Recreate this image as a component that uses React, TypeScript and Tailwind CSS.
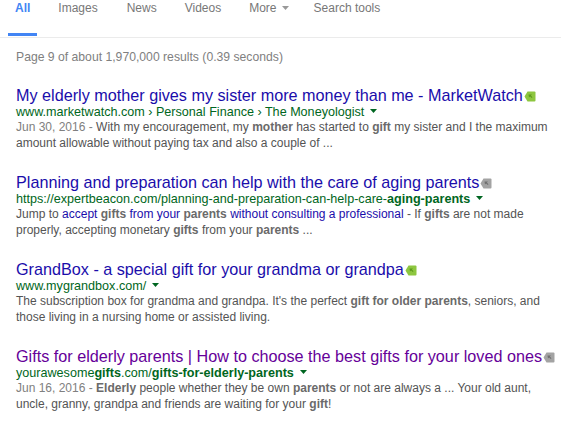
import React from 'react'

type Part = { t: string; b?: boolean; link?: boolean }

function TagIcon({ green }: { green: boolean }) {
  const fill = green ? '#8dc63f' : '#a3a3a3'
  const dark = green ? '#5f9a1e' : '#707070'
  return (
    <svg width="12" height="11" viewBox="0 0 12 11" className="inline-block align-[-1px] ml-px">
      <path d="M3.5 0.5 H10.5 A1 1 0 0 1 11.5 1.5 V9.5 A1 1 0 0 1 10.5 10.5 H3.5 L0.5 5.5 Z" fill={fill} />
      <path d="M4.5 3.5 L8 3.5 L6.9 4.6 L8.5 6.2 L7.7 7 L6.1 5.4 L5 6.5 Z" fill={dark} />
    </svg>
  )
}

function Caret() {
  return (
    <svg width="7" height="4" viewBox="0 0 7 4" className="inline-block ml-[6px] align-[3px]">
      <path d="M0 0 H7 L3.5 4 Z" fill="#006621" />
    </svg>
  )
}

function Snippet({ date, parts }: { date?: string; parts: Part[] }) {
  return (
    <div className="text-[12px] leading-[16px] text-[#545454] w-[545px]">
      {date && <span className="text-[#808080]">{date} - </span>}
      {parts.map((p, i) => (
        <span
          key={i}
          className={`${p.b ? 'font-bold text-[#6a6a6a]' : ''} ${p.link ? 'text-[#1a0dab]' : ''}`}
        >
          {p.t}
        </span>
      ))}
    </div>
  )
}

function Result({
  title,
  visited,
  green,
  url,
  date,
  parts,
}: {
  title: string
  visited?: boolean
  green: boolean
  url: Part[]
  date?: string
  parts: Part[]
}) {
  return (
    <div className="mb-[21px]">
      <div className={`text-[16.2px] leading-[20px] whitespace-nowrap ${visited ? 'text-[#660099]' : 'text-[#1a0dab]'}`}>
        {title}
        <TagIcon green={green} />
      </div>
      <div className="text-[12.6px] leading-[14px] text-[#006621] whitespace-nowrap">
        {url.map((u, i) => (
          <span key={i} className={u.b ? 'font-bold' : ''}>
            {u.t}
          </span>
        ))}
        <Caret />
      </div>
      <Snippet date={date} parts={parts} />
    </div>
  )
}

export default function App() {
  return (
    <div className="w-[561px] h-[421px] bg-white overflow-hidden font-['Liberation_Sans',Arial,sans-serif]">
      <div className="flex gap-[29px] pl-[15px] h-[36px] text-[12px] leading-[16px] text-[#777777]">
        <span className="-mx-[7px] px-[7px] pb-[17px] border-b-[3px] border-[#4285f4] text-[#4285f4] font-bold h-[36px]">
          All
        </span>
        <span className="-ml-px">Images</span>
        <span>News</span>
        <span className="-ml-px">Videos</span>
        <span className="flex items-start -ml-px -mr-[4px]">
          More
          <svg width="7" height="4" viewBox="0 0 7 4" className="ml-[5px] mt-[6px]">
            <path d="M0 0 H7 L3.5 4 Z" fill="#999999" />
          </svg>
        </span>
        <span>Search tools</span>
      </div>
      <div className="mt-px h-px bg-[#ebebeb]" />

      <div className="px-4">
        <div className="mt-[11px] mb-[20px] text-[12.2px] leading-[16px] text-[#808080]">
          Page 9 of about 1,970,000 results (0.39 seconds)
        </div>

        <Result
          title="My elderly mother gives my sister more money than me - MarketWatch"
          green
          url={[{ t: 'www.marketwatch.com › Personal Finance › The Moneyologist' }]}
          date="Jun 30, 2016"
          parts={[
            { t: 'With my encouragement, my ' },
            { t: 'mother', b: true },
            { t: ' has started to ' },
            { t: 'gift', b: true },
            { t: ' my sister and I the maximum amount allowable without paying tax and also a couple of ...' },
          ]}
        />

        <Result
          title="Planning and preparation can help with the care of aging parents"
          green={false}
          url={[
            { t: 'https://expertbeacon.com/planning-and-preparation-can-help-care-' },
            { t: 'aging-parents', b: true },
          ]}
          parts={[
            { t: 'Jump to ' },
            { t: 'accept ', link: true },
            { t: 'gifts', link: true, b: true },
            { t: ' from your ', link: true },
            { t: 'parents', link: true, b: true },
            { t: ' without consulting a professional', link: true },
            { t: ' - If ' },
            { t: 'gifts', b: true },
            { t: ' are not made properly, accepting monetary ' },
            { t: 'gifts', b: true },
            { t: ' from your ' },
            { t: 'parents', b: true },
            { t: ' ...' },
          ]}
        />

        <Result
          title="GrandBox - a special gift for your grandma or grandpa"
          green
          url={[{ t: 'www.mygrandbox.com/' }]}
          parts={[
            { t: "The subscription box for grandma and grandpa. It's the perfect " },
            { t: 'gift for older parents', b: true },
            { t: ', seniors, and those living in a nursing home or assisted living.' },
          ]}
        />

        <Result
          title="Gifts for elderly parents | How to choose the best gifts for your loved ones"
          visited
          green={false}
          url={[
            { t: 'yourawesome' },
            { t: 'gifts', b: true },
            { t: '.com/' },
            { t: 'gifts-for-elderly-parents', b: true },
          ]}
          date="Jun 16, 2016"
          parts={[
            { t: 'Elderly', b: true },
            { t: ' people whether they be own ' },
            { t: 'parents', b: true },
            { t: ' or not are always a ... Your old aunt, uncle, granny, grandpa and friends are waiting for your ' },
            { t: 'gift', b: true },
            { t: '!' },
          ]}
        />
      </div>
    </div>
  )
}
